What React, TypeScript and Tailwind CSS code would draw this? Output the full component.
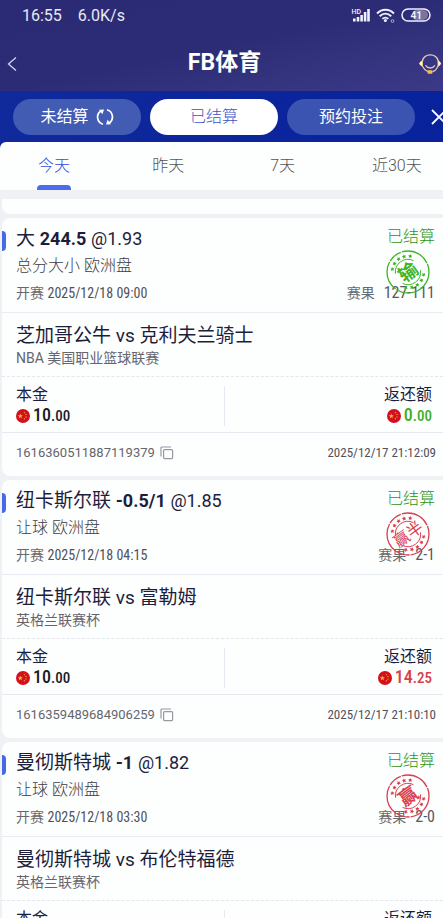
import type { ReactNode } from "react";

type Bet = {
  pick: string;
  line: string;
  odds: string;
  market: string;
  start: string;
  score: string;
  match: string;
  league: string;
  refund: [string, string];
  won: boolean;
  stamp: string;
  id: string;
  time: string;
};

const bets: Bet[] = [
  {
    pick: "大",
    line: "244.5",
    odds: "@1.93",
    market: "总分大小 欧洲盘",
    start: "2025/12/18 09:00",
    score: "127-111",
    match: "芝加哥公牛 vs 克利夫兰骑士",
    league: "NBA 美国职业篮球联赛",
    refund: ["0", ".00"],
    won: false,
    stamp: "输",
    id: "1616360511887119379",
    time: "2025/12/17 21:12:09",
  },
  {
    pick: "纽卡斯尔联",
    line: "-0.5/1",
    odds: "@1.85",
    market: "让球 欧洲盘",
    start: "2025/12/18 04:15",
    score: "2-1",
    match: "纽卡斯尔联 vs 富勒姆",
    league: "英格兰联赛杯",
    refund: ["14", ".25"],
    won: true,
    stamp: "赢半",
    id: "1616359489684906259",
    time: "2025/12/17 21:10:10",
  },
  {
    pick: "曼彻斯特城",
    line: "-1",
    odds: "@1.82",
    market: "让球 欧洲盘",
    start: "2025/12/18 03:30",
    score: "2-0",
    match: "曼彻斯特城 vs 布伦特福德",
    league: "英格兰联赛杯",
    refund: ["18", ".20"],
    won: true,
    stamp: "赢",
    id: "1616358342601170323",
    time: "2025/12/17 21:05:36",
  },
];

const days = ["今天", "昨天", "7天", "近30天"];

function Num({ children, className = "" }: { children: ReactNode; className?: string }) {
  return (
    <span className={`font-['Roboto_Condensed',Roboto,sans-serif] ${className}`}>
      {children}
    </span>
  );
}

function StatusBar() {
  return (
    <div className="flex h-8 items-center justify-between pl-[22px] pr-3 text-base text-white/90">
      <div className="flex gap-4">
        <span>16:55</span>
        <span>6.0K/s</span>
      </div>
      <svg width="80" height="18" viewBox="0 0 80 18" fill="none" className="text-[#f0f0ff]">
        <text x="0.500" y="6.500" fontSize="7" fontWeight="500" fill="currentColor">HD</text>
        <path
          d="M2 14.500v-3h2.600v3zM5.700 14.500v-4.500h2.600v4.500zM9.300 14.500V8h2.600v6.500zM12.800 14.500V5h2.600v9.500zM16.200 14.500V2h2.600v12.500z"
          fill="currentColor"
        />
        <path
          d="M26 6.500c5-5 12-5 17 0M28.700 9.300c3.500-3.400 8-3.400 11.500 0M31.400 11.900c2-1.700 4-1.700 6 0"
          stroke="currentColor"
          strokeWidth="1.900"
        />
        <circle cx="34.400" cy="13.600" r="1.500" fill="currentColor" />
        <circle cx="41.500" cy="14" r="1.400" stroke="#a9a8d8" strokeWidth="1" />
        <path d="M64 3h8a5 5 0 0 1 0 10h-8z" fill="#77769f" />
        <rect x="51" y="2" width="28" height="12" rx="6" stroke="currentColor" strokeWidth="1.500" />
        <text x="59.500" y="11.500" fontSize="10" fontWeight="700" fill="currentColor">41</text>
      </svg>
    </div>
  );
}

function Header() {
  return (
    <header className="bg-linear-to-br from-[#2b2a74] via-[#2c2c76] to-[#3c3a87]">
      <StatusBar />
      <div className="flex h-[59px] items-center justify-between pl-[7px] pr-px pt-1">
        <button aria-label="返回" className="w-6">
          <svg width="10" height="16" viewBox="0 0 10 16" fill="none" stroke="#d5d5ee" strokeWidth="1.300">
            <path d="M9 1.500 1.500 8 9 14.500" />
          </svg>
        </button>
        <h1 className="text-[23px] font-bold text-white">FB体育</h1>
        <button aria-label="客服">
          <svg width="24" height="22" viewBox="0 0 24 22" fill="none">
            <path d="M4.300 8a8.300 8.300 0 0 1 16 0" stroke="#e6cdb5" strokeWidth="1.400" />
            <path d="M4.500 13c1 2.500 3 4.600 6 5.600M20 13c-1 2.800-2.600 4.700-5.500 5.800" stroke="#dcc9c4" strokeWidth="1.200" />
            <path d="M4.500 7.500v6C2.800 12.800 1.200 11.500 1.200 10.500s1.600-2.300 3.300-3zM20 7.500v6c1.700-.7 3-2 3-3s-1.300-2.300-3-3z" fill="#fff3d8" />
            <path d="M4.500 7.500v6M20 7.500v6" stroke="#f0c47a" strokeWidth="1" />
            <path d="M7.500 12.300c2.500 3.600 7 3.600 9.500 0" stroke="#e3c9a5" strokeWidth="1.300" />
            <rect x="9.500" y="17.300" width="5" height="3.400" rx="1" fill="#f3bd58" />
          </svg>
        </button>
      </div>
    </header>
  );
}

function FilterBar() {
  return (
    <div className="flex h-[51px] items-center gap-[9px] overflow-hidden bg-linear-to-r from-[#10299b] to-[#08229b] pl-[13px] text-base">
      <button className="flex h-9 flex-1 items-center justify-center gap-[7px] rounded-full bg-[#425cb4] text-white">
        未结算
        <svg width="18" height="18" viewBox="0 0 18 18" fill="none" stroke="white" strokeWidth="1.700">
          <path d="M7 16.200A7.400 7.400 0 0 1 4.600 3.100M11 1.800a7.400 7.400 0 0 1 2.400 13.100" />
          <path d="M3 1.800 8 1.600 6.400 6.200zM15 16.200l-5 .2 1.600-4.600z" fill="white" stroke="none" />
        </svg>
      </button>
      <button className="h-9 flex-1 rounded-full bg-white font-light text-[#3854c8]">已结算</button>
      <button className="h-9 flex-1 rounded-full bg-[#3b54b2] text-white">预约投注</button>
      <button aria-label="关闭" className="w-[19px] pl-[7px]">
        <svg width="16" height="16" viewBox="0 0 16 16" className="max-w-none" stroke="white" strokeWidth="1.800">
          <path d="m1 1 14 14M15 1 1 15" />
        </svg>
      </button>
    </div>
  );
}

function DayTabs() {
  return (
    <nav className="overflow-hidden rounded-tl-md bg-[#fdfefe]">
      <div className="-ml-[3px] -mr-[11px] grid grid-cols-4">
        {days.map((day, i) => (
          <button
            key={day}
            className={`flex h-12 flex-col items-center justify-between pt-3 text-base font-light ${
              i === 0 ? "text-[#2f50d8]" : "text-[#555]"
            }`}
          >
            {day}
            {i === 0 && <span className="h-[5px] w-[34px] rounded-t bg-[#4b6cec]" />}
          </button>
        ))}
      </div>
    </nav>
  );
}

const star = "m22 3.900.7 1.300 1.400.2-1 1 .2 1.500-1.300-.7-1.300.7.2-1.500-1-1 1.400-.2z";

function Stamp({ text, won }: { text: string; won: boolean }) {
  const half = text.length > 1;
  return (
    <svg
      width="44"
      height="44"
      viewBox="0 0 44 44"
      fill="none"
      className={`absolute right-[13px] top-8 ${won ? "text-[#d8404f]" : "text-[#3fb526]"}`}
    >
      <circle cx="22" cy="22" r="21" stroke="currentColor" strokeWidth="1.300" strokeDasharray="30 1 14 1" />
      <g transform="rotate(-36 22 22)">
        <path d="M10.900 16a12.600 12.600 0 0 1 22.200 0M10.900 28a12.600 12.600 0 0 0 22.200 0" stroke="currentColor" strokeWidth="0.900" />
        {[-44, -22, 0, 22, 44, 136, 158, 180, 202, 224].map((angle) => (
          <path key={angle} transform={`rotate(${angle} 22 22)`} d={star} fill="currentColor" />
        ))}
        <text
          x="22"
          y={half ? 28 : 29}
          fontSize={half ? 16 : 19}
          fontWeight={half ? 400 : 700}
          textAnchor="middle"
          fill="currentColor"
        >
          {text}
        </text>
      </g>
    </svg>
  );
}

function Coin() {
  return (
    <svg width="14" height="14" viewBox="0 0 14 14">
      <circle cx="7" cy="7" r="7" fill="#d4101f" />
      <path d="m4.300 4.500.7 1.700 1.800.1-1.400 1.200.5 1.800-1.600-1-1.600 1 .5-1.800-1.400-1.200 1.800-.1z" fill="#f6b73c" />
      <g fill="#f09a35">
        <circle cx="8.400" cy="3.600" r="0.700" />
        <circle cx="10" cy="5.400" r="0.700" />
        <circle cx="10" cy="7.900" r="0.700" />
        <circle cx="8.400" cy="9.800" r="0.700" />
      </g>
    </svg>
  );
}

function Amount({ value, className }: { value: [string, string]; className: string }) {
  return (
    <div className={`flex items-center gap-[3px] ${className}`}>
      <Coin />
      <Num className="text-lg font-medium leading-5">
        {value[0]}
        <span className="text-[15px]">{value[1]}</span>
      </Num>
    </div>
  );
}

function BetCard({ bet }: { bet: Bet }) {
  return (
    <article className="relative rounded-l-lg bg-[#fdfefe] text-[#1d1d3c]">
      <span className="absolute left-0 top-[13px] h-5 w-1 rounded-r bg-[#4769e8]" />
      <div className="relative h-[95px] border-b border-[#e9ecf3] pl-[14px] pr-2 pt-[9px]">
        <div className="flex h-6 items-start justify-between">
          <h2 className="text-[19px] leading-6">
            {bet.pick} <b className="text-lg leading-6">{bet.line}</b>{" "}
            <span className="text-lg leading-6">{bet.odds}</span>
          </h2>
          <span className="text-base font-light leading-5 text-[#2f9412]">已结算</span>
        </div>
        <p className="mt-[3px] text-base font-light leading-6 text-[#3c3c46]">{bet.market}</p>
        <div className="mt-[3px] flex h-6 items-center justify-between text-sm leading-6 text-[#686870]">
          <span>
            开赛 <Num className="text-[#50505a]">{bet.start}</Num>
          </span>
          <span className="flex items-center gap-[9px]">
            赛果 <Num className="text-base leading-6 text-[#565665]">{bet.score}</Num>
          </span>
        </div>
        <Stamp text={bet.stamp} won={bet.won} />
      </div>
      <div className="h-16 border-b border-dashed border-[#e3e6ec] pl-[14px] pt-[11px]">
        <h3 className="text-[19px] leading-6">{bet.match}</h3>
        <p className="text-sm leading-5 text-[#65656e]">{bet.league}</p>
      </div>
      <div className="flex h-14 items-center border-b border-[#e6e9ef] pl-[14px] pr-[11px] pt-[2px]">
        <div className="flex-1">
          <div className="text-base leading-5">本金</div>
          <Amount value={["10", ".00"]} className="text-[#1b1b25]" />
        </div>
        <div className="h-10 w-px bg-[#e6e8f3]" />
        <div className="flex flex-1 flex-col items-end">
          <div className="text-base leading-5">返还额</div>
          <Amount value={bet.refund} className={bet.won ? "text-[#d6404b]" : "text-[#3fae2a]"} />
        </div>
      </div>
      <div className="flex h-[43px] items-center justify-between pb-1 pl-[14px] pr-[7px] text-[#65656d]">
        <div className="flex items-center gap-[5px] text-[13px]">
          {bet.id}
          <button aria-label="复制">
            <svg width="14" height="14" viewBox="0 0 14 14" fill="none" stroke="#98989d" strokeWidth="1.200">
              <rect x="3.600" y="3.600" width="9" height="9" rx="1" />
              <path d="M1 10.500V2a1 1 0 0 1 1-1h9" />
            </svg>
          </button>
        </div>
        <Num className="text-[13px] text-[#50505a]">{bet.time}</Num>
      </div>
    </article>
  );
}

export default function App() {
  return (
    <div className="flex h-screen flex-col bg-[#eff1f5] font-[Roboto,'Noto_Sans_CJK_SC',sans-serif]">
      <Header />
      <div className="bg-[#0d279b]">
        <FilterBar />
        <DayTabs />
      </div>
      <main className="flex-1 space-y-1 overflow-y-auto pl-[2px] pt-[9px] [scrollbar-width:none]">
        <div className="h-[15px] rounded-bl-lg bg-[#fdfefe]" />
        {bets.map((bet) => (
          <BetCard key={bet.id} bet={bet} />
        ))}
      </main>
    </div>
  );
}
